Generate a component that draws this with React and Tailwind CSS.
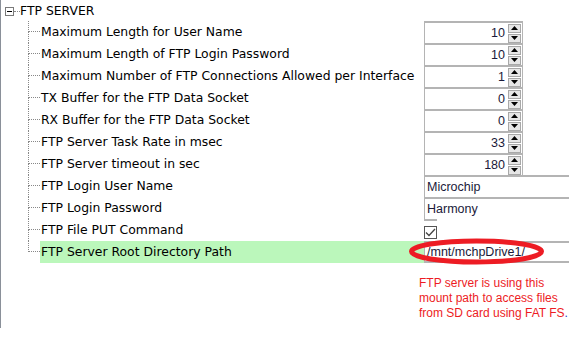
import React from 'react';

const rows = [
  { label: 'Maximum Length for User Name', type: 'spin', value: '10' },
  { label: 'Maximum Length of FTP Login Password', type: 'spin', value: '10' },
  { label: 'Maximum Number of FTP Connections Allowed per Interface', type: 'spin', value: '1' },
  { label: 'TX Buffer for the FTP Data Socket', type: 'spin', value: '0' },
  { label: 'RX Buffer for the FTP Data Socket', type: 'spin', value: '0' },
  { label: 'FTP Server Task Rate in msec', type: 'spin', value: '33' },
  { label: 'FTP Server timeout in sec', type: 'spin', value: '180' },
  { label: 'FTP Login User Name', type: 'text', value: 'Microchip' },
  { label: 'FTP Login Password', type: 'text', value: 'Harmony' },
  { label: 'FTP File PUT Command', type: 'check' },
  { label: 'FTP Server Root Directory Path', type: 'text', value: '/mnt/mchpDrive1/', selected: true },
];

const valueFont = { fontFamily: '"Liberation Sans", Arial, sans-serif' };

const Spinner = () => (
  <div className="flex flex-col gap-[1px] w-[13px] mr-[1px]">
    <div className="h-[9px] bg-[#e6e6e6] border border-[#a8a8a8] flex items-center justify-center">
      <svg width="7" height="4" viewBox="0 0 7 4"><path d="M3.5 0 L7 4 L0 4 Z" fill="#000" /></svg>
    </div>
    <div className="h-[9px] bg-[#e6e6e6] border border-[#a8a8a8] flex items-center justify-center">
      <svg width="7" height="4" viewBox="0 0 7 4"><path d="M0 0 L7 0 L3.5 4 Z" fill="#000" /></svg>
    </div>
  </div>
);

const ValueCell = ({ row, last }) => {
  if (row.type === 'spin') {
    return (
      <div className="w-[99px] h-full border-l border-r border-t-2 border-[#b4b4b4] bg-white flex items-center justify-end">
        <span className="text-[#1a1a3a] pr-[3px] text-[12.5px]" style={valueFont}>{row.value}</span>
        <Spinner />
      </div>
    );
  }
  if (row.type === 'check') {
    return (
      <div className="h-full border-t-2 border-[#b4b4b4] flex items-center">
        <div className="w-[13px] h-[13px] border border-[#555] bg-white flex items-center justify-center mt-[3px]">
          <svg width="11" height="9" viewBox="0 0 11 9"><path d="M1 4.5 L4 7.5 L10 1" stroke="#444" strokeWidth="1.3" fill="none" /></svg>
        </div>
      </div>
    );
  }
  return (
    <div
      className={`flex-1 h-full border-l border-t-2 border-[#b4b4b4] bg-white flex items-center pl-[2px] text-[12.5px] text-[#1a1a3a] ${last ? 'border-b-2' : ''}`}
      style={valueFont}
    >
      {row.value}
    </div>
  );
};

export default function App() {
  return (
    <div className="w-[569px] h-[355px] bg-white relative overflow-hidden text-[12.4px] text-black" style={{ fontFamily: '"DejaVu Sans", Verdana, sans-serif' }}>
      <div className="absolute left-0 top-0 w-[1px] h-[328px] bg-[#8a9099]" />
      <div className="pl-[5px] pt-[2px]">
        <div className="h-[19px] flex items-center">
          <div className="w-[9px] h-[9px] border border-[#7a7a7a] flex items-center justify-center">
            <div className="w-[5px] h-[1px] bg-black" />
          </div>
          <div className="w-[6px] border-t border-dotted border-[#888]" />
          <span>FTP SERVER</span>
        </div>
        <div className="flex flex-col ml-[23px]">
          {rows.map((row, i) => (
            <div key={i} className="h-[22px] flex">
              <div className="w-[12px] h-full flex flex-col">
                <div className="h-[11px] border-l border-b border-dotted border-[#888]" />
                <div className={`h-[11px] ${i === rows.length - 1 ? '' : 'border-l border-dotted border-[#888]'}`} />
              </div>
              <div className={`w-[384px] h-full flex items-center ${row.selected ? 'bg-[#bbf7bb]' : ''}`}>
                <span className="pl-[1px] whitespace-nowrap">{row.label}</span>
              </div>
              <div className="flex-1 flex h-full">
                <ValueCell row={row} last={i === rows.length - 1} />
              </div>
            </div>
          ))}
        </div>
      </div>
      <svg className="absolute left-[405px] top-[235px]" width="144" height="34" viewBox="0 0 144 34">
        <ellipse cx="71.5" cy="16.5" rx="65" ry="10.5" stroke="#ed1c24" strokeWidth="5" fill="none" />
      </svg>
      <div className="absolute left-[419px] top-[276px] text-[12px] leading-[15px] text-[#ed1c24] whitespace-nowrap" style={valueFont}>
        <div>FTP server is using this</div>
        <div>mount path to access files</div>
        <div>from SD card using FAT FS<span className="text-[#1f3fbf]">.</span></div>
      </div>
    </div>
  );
}
